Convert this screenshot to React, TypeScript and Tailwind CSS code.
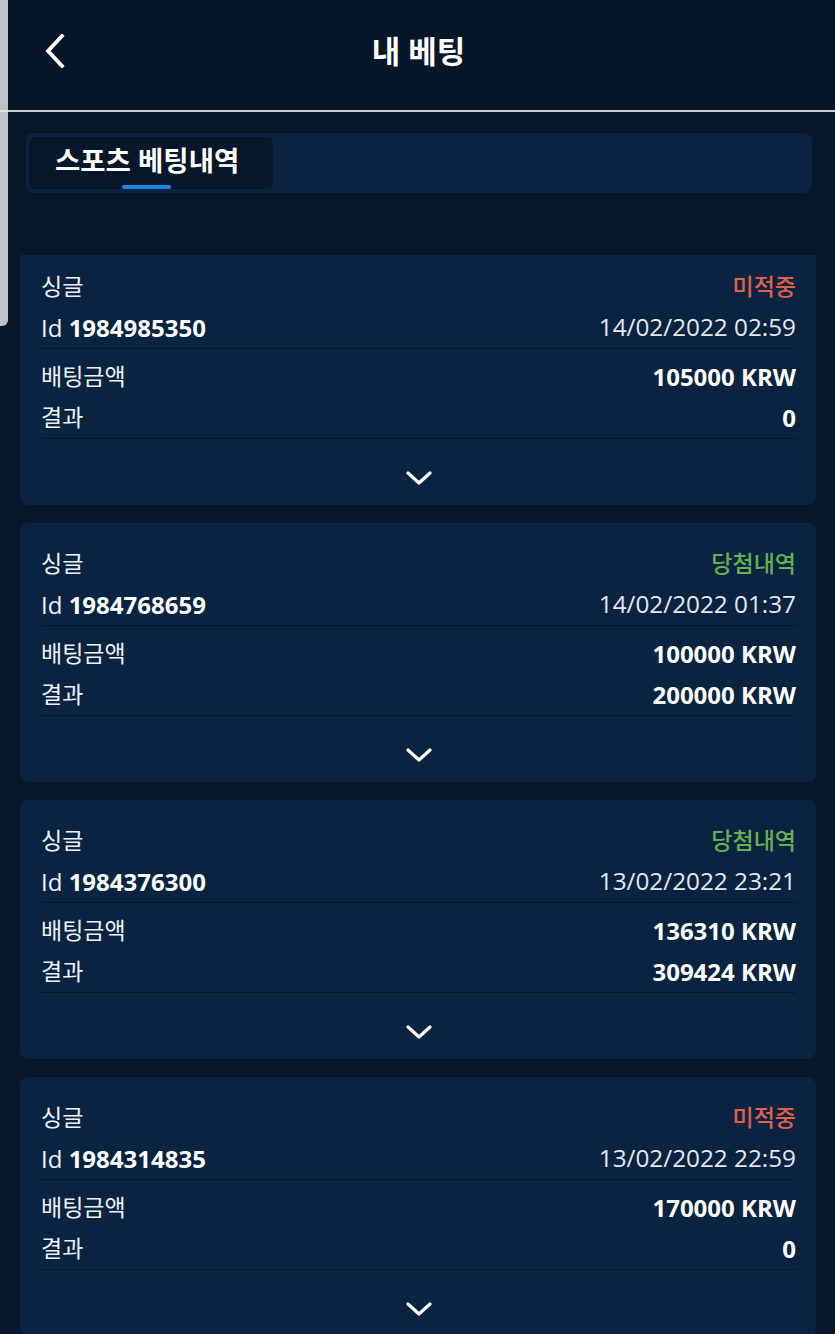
import React from 'react';

type Bet = {
  id: string;
  date: string;
  stake: string;
  result: string;
  won: boolean;
};

const bets: Bet[] = [
  { id: '1984985350', date: '14/02/2022 02:59', stake: '105000 KRW', result: '0', won: false },
  { id: '1984768659', date: '14/02/2022 01:37', stake: '100000 KRW', result: '200000 KRW', won: true },
  { id: '1984376300', date: '13/02/2022 23:21', stake: '136310 KRW', result: '309424 KRW', won: true },
  { id: '1984314835', date: '13/02/2022 22:59', stake: '170000 KRW', result: '0', won: false },
];

function ChevronDown() {
  return (
    <svg width="26" height="14" viewBox="0 0 26 14" fill="none">
      <path d="M2 2 L13 12 L24 2" stroke="white" strokeWidth="3.2" strokeLinecap="round" strokeLinejoin="round" />
    </svg>
  );
}

function BetCard({ bet }: { bet: Bet }) {
  return (
    <div className="bg-[#0a2340] rounded-lg pl-[21px] pr-[20px] pt-[20px]">
      {/* Head */}
      <div className="border-b border-[#061729]">
        <div className="h-[41px] flex items-center justify-between">
          <span className="text-[23px] text-[#eef1f4]">싱글</span>
          <span
            className={
              bet.won
                ? 'text-[23px] font-medium text-[#66b04f]'
                : 'text-[23px] font-medium text-[#e0604a]'
            }
          >
            {bet.won ? '당첨내역' : '미적중'}
          </span>
        </div>
        <div className="h-[41px] flex items-center justify-between">
          <span className="text-[24px] text-[#eef1f4]">
            Id <span className="font-bold text-white">{bet.id}</span>
          </span>
          <span className="text-[24.3px] text-[#e4e8ec]">{bet.date}</span>
        </div>
      </div>

      {/* Amounts */}
      <div className="pt-[7px] border-b border-[#061729]">
        <div className="h-[41px] flex items-center justify-between">
          <span className="text-[23px] text-[#eef1f4]">배팅금액</span>
          <span className="text-[24px] font-bold text-white">{bet.stake}</span>
        </div>
        <div className="h-[41px] flex items-center justify-between">
          <span className="text-[23px] text-[#eef1f4]">결과</span>
          <span className="text-[24px] font-bold text-white">{bet.result}</span>
        </div>
      </div>

      <div className="h-[66px] pt-[32px] flex justify-center">
        <ChevronDown />
      </div>
    </div>
  );
}

export default function App() {
  return (
    <div
      className="relative w-[835px] h-[1334px] overflow-hidden bg-[#08172a] text-white"
      style={{ fontFamily: '"Open Sans", "Noto Sans CJK KR", sans-serif' }}
    >
      {/* Header */}
      <div className="h-[110px] bg-[#071628] flex items-center justify-center relative">
        <button className="absolute left-[44px] top-[33px] w-[24px] h-[36px] flex items-center">
          <svg width="22" height="34" viewBox="0 0 22 34" fill="none">
            <path d="M18 2 L4 17 L18 32" stroke="white" strokeWidth="3.8" strokeLinecap="square" />
          </svg>
        </button>
        <h1 className="text-[31px] font-bold -mt-[8px] pl-[2px]">내 베팅</h1>
      </div>
      <div className="h-[2px] bg-[#c9ced3]" />

      {/* Tabs */}
      <div className="mt-[21px] ml-[26px] mr-[23px] h-[60px] bg-[#0b2340] rounded-lg p-[4px] pl-[3px] flex">
        <div className="relative w-[244px] h-full bg-[#081729] rounded-md flex items-center pl-[26px]">
          <span className="text-[27.5px] font-bold text-white -mt-[4px]">스포츠 베팅내역</span>
          <div className="absolute bottom-0 left-[93px] w-[49px] h-[4px] rounded-full bg-[#1d86e6]" />
        </div>
      </div>

      {/* Bet list */}
      <div className="mt-[62px] ml-[20px] mr-[19px] overflow-hidden h-[1079px]">
        <div className="-mt-[9px] flex flex-col gap-[18px]">
          {bets.map((b) => (
            <BetCard key={b.id} bet={b} />
          ))}
        </div>
      </div>

      {/* side scroll handle */}
      <div className="absolute left-0 top-0 w-[8px] h-[326px] bg-[#bfc3c7] rounded-br-md" />
      <div className="absolute left-0 top-[110px] w-[8px] h-[2px] bg-[#e2e5e8]" />
    </div>
  );
}
